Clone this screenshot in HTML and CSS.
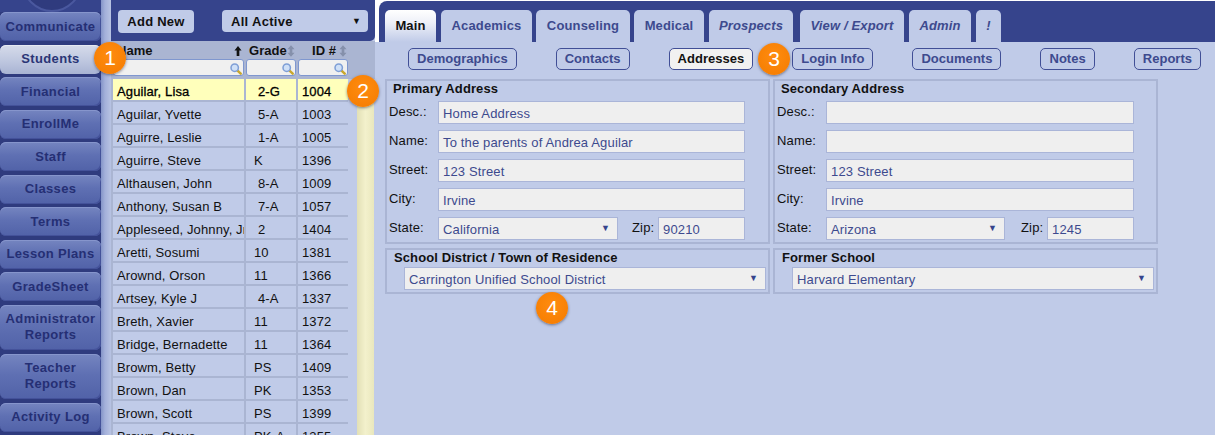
FILE: index.html
```html
<!DOCTYPE html>
<html lang="en">
<head>
<meta charset="utf-8">
<title>Students</title>
<link rel="stylesheet" href="styles.css">
</head>
<body>
<svg class="defs" width="0" height="0" aria-hidden="true">
  <symbol id="mag" viewBox="0 0 14 14">
    <line x1="8.500" y1="8.500" x2="12.500" y2="12.500" stroke="#c9a72c" stroke-width="2.800" stroke-linecap="round"/>
    <circle cx="5.500" cy="5.500" r="4.300" fill="#cfe0f7" stroke="#7f9fd6" stroke-width="1.800"/>
  </symbol>
  <symbol id="sort" viewBox="0 0 9 13">
    <path d="M4.500 0 8.500 4.500H6V8.500h2.500L4.500 13 .5 8.500H3V4.500H.5z" fill="#8590ab"/>
  </symbol>
  <symbol id="up" viewBox="0 0 9 13">
    <path d="M4.500 1 8.500 6H6v6H3V6H.5z" fill="#111"/>
  </symbol>
</svg>
<div class="app">
  <nav class="nav">
    <div class="nav-logo"></div>
    <a class="nav-btn">Communicate</a>
    <a class="nav-btn active">Students</a>
    <a class="nav-btn">Financial</a>
    <a class="nav-btn">EnrollMe</a>
    <a class="nav-btn">Staff</a>
    <a class="nav-btn">Classes</a>
    <a class="nav-btn">Terms</a>
    <a class="nav-btn">Lesson Plans</a>
    <a class="nav-btn">GradeSheet</a>
    <a class="nav-btn tall">Administrator<br>Reports</a>
    <a class="nav-btn tall">Teacher<br>Reports</a>
    <a class="nav-btn">Activity Log</a>
  </nav>
  <div class="gutter"></div>
  <section class="list">
    <div class="list-top">
      <button class="add-btn">Add New</button>
      <div class="filter"><span>All Active</span><span class="filter-arrow">▼</span></div>
    </div>
    <div class="heads">
      <div class="head head-name"><span>Name</span><svg class="ico-sort"><use href="#up"/></svg></div>
      <div class="head head-grade"><span>Grade</span><svg class="ico-sort"><use href="#sort"/></svg></div>
      <div class="head head-id"><span>ID #</span><svg class="ico-sort"><use href="#sort"/></svg></div>
      <div class="search"><svg class="ico-mag"><use href="#mag"/></svg></div>
      <div class="search"><svg class="ico-mag"><use href="#mag"/></svg></div>
      <div class="search"><svg class="ico-mag"><use href="#mag"/></svg></div>
    </div>
    <div class="list-body">
      <div class="list-table">
        <div class="row sel"><div>Aguilar, Lisa</div><div class="g1">2-G</div><div>1004</div></div>
        <div class="row"><div>Aguilar, Yvette</div><div class="g1">5-A</div><div>1003</div></div>
        <div class="row"><div>Aguirre, Leslie</div><div class="g1">1-A</div><div>1005</div></div>
        <div class="row"><div>Aguirre, Steve</div><div>K</div><div>1396</div></div>
        <div class="row"><div>Althausen, John</div><div class="g1">8-A</div><div>1009</div></div>
        <div class="row"><div>Anthony, Susan B</div><div class="g1">7-A</div><div>1057</div></div>
        <div class="row"><div>Appleseed, Johnny, Jr</div><div class="g1">2</div><div>1404</div></div>
        <div class="row"><div>Aretti, Sosumi</div><div>10</div><div>1381</div></div>
        <div class="row"><div>Arownd, Orson</div><div>11</div><div>1366</div></div>
        <div class="row"><div>Artsey, Kyle J</div><div class="g1">4-A</div><div>1337</div></div>
        <div class="row"><div>Breth, Xavier</div><div>11</div><div>1372</div></div>
        <div class="row"><div>Bridge, Bernadette</div><div>11</div><div>1364</div></div>
        <div class="row"><div>Browm, Betty</div><div>PS</div><div>1409</div></div>
        <div class="row"><div>Brown, Dan</div><div>PK</div><div>1353</div></div>
        <div class="row"><div>Brown, Scott</div><div>PS</div><div>1399</div></div>
        <div class="row"><div>Brown, Steve</div><div>PK-A</div><div>1355</div></div>
      </div>
      <div class="scrollbar"></div>
    </div>
  </section>
  <main class="main">
    <div class="tabs-wrap">
      <div class="tabs">
        <a class="tab active">Main</a>
        <a class="tab t-aca">Academics</a>
        <a class="tab t-cou">Counseling</a>
        <a class="tab t-med">Medical</a>
        <a class="tab it t-pro">Prospects</a>
        <a class="tab it t-vie">View / Export</a>
        <a class="tab it t-adm">Admin</a>
        <a class="tab it t-ex">!</a>
      </div>
    </div>
    <div class="subtabs">
      <a class="sub">Demographics</a>
      <a class="sub">Contacts</a>
      <a class="sub active">Addresses</a>
      <a class="sub">Login Info</a>
      <a class="sub">Documents</a>
      <a class="sub">Notes</a>
      <a class="sub">Reports</a>
    </div>
    <div class="forms">
      <section class="box">
        <h3>Primary Address</h3>
        <div class="grid">
          <label>Desc.:</label><div class="inp">Home Address</div>
          <label>Name:</label><div class="inp">To the parents of Andrea Aguilar</div>
          <label>Street:</label><div class="inp">123 Street</div>
          <label>City:</label><div class="inp">Irvine</div>
          <label>State:</label>
          <div class="state">
            <div class="inp sel-box sel-a">California<span class="arrow">▼</span></div>
            <label class="zip-l">Zip:</label>
            <div class="inp zip">90210</div>
          </div>
        </div>
      </section>
      <section class="box alt">
        <h3>Secondary Address</h3>
        <div class="grid">
          <label>Desc.:</label><div class="inp"></div>
          <label>Name:</label><div class="inp"></div>
          <label>Street:</label><div class="inp">123 Street</div>
          <label>City:</label><div class="inp">Irvine</div>
          <label>State:</label>
          <div class="state">
            <div class="inp sel-box sel-a">Arizona<span class="arrow">▼</span></div>
            <label class="zip-l">Zip:</label>
            <div class="inp zip">1245</div>
          </div>
        </div>
      </section>
      <section class="box small">
        <h3>School District / Town of Residence</h3>
        <div class="inp sel-box wide">Carrington Unified School District<span class="arrow">▼</span></div>
      </section>
      <section class="box small">
        <h3>Former School</h3>
        <div class="inp sel-box wide">Harvard Elementary<span class="arrow">▼</span></div>
      </section>
    </div>
  </main>
</div>
<div class="badge b1">1</div>
<div class="badge b2">2</div>
<div class="badge b3">3</div>
<div class="badge b4">4</div>
</body>
</html>
```
FILE: styles.css
```css
* { box-sizing: border-box; }
html, body { margin: 0; padding: 0; }
body {
  width: 1215px; height: 435px; overflow: hidden; position: relative;
  background: #fff;
  font: 13px/1 "Liberation Sans", Arial, sans-serif;
  letter-spacing: .15px;
  color: #111;
}
.defs { position: absolute; }
.app { display: flex; height: 435px; }

/* left navigation */
.nav { width: 101px; flex: none; background: #2f3b7e; overflow: hidden; }
.nav-logo { height: 12px; background: #36448c; position: relative; overflow: hidden; }
.nav-logo::after {
  content: ""; position: absolute; left: 22px; top: -48px; width: 56px; height: 56px;
  border-radius: 50%; border: 2px solid #4a589f; background: #2f3b7e;
}
.nav-btn {
  display: flex; align-items: center; justify-content: center; text-align: center;
  height: 29px; margin-bottom: 3.5px;
  border-radius: 6px;
  background: linear-gradient(#7585c0, #5f70b3 45%, #5162a8);
  box-shadow: inset 0 1px 0 #8695cc, inset -1px -1px 0 #44529a;
  color: #252f74;
  font-weight: bold; font-size: 13px; line-height: 16px; letter-spacing: .35px;
}
.nav-btn.tall { height: 45.5px; }
.nav-btn.active {
  background: linear-gradient(#d6dbea, #bcc5de 60%, #a8b3d3);
  box-shadow: inset 0 1px 0 #e6e9f2;
  color: #2a3576;
}

.gutter { width: 10px; flex: none; background: linear-gradient(90deg, #8494c8, #a3b0da 40%, #b8c3e3); }

/* list panel */
.list { width: 264px; flex: none; background: #c0cbe8; display: flex; flex-direction: column; min-height: 0; }
.list-top {
  height: 41px; flex: none; background: #36448c; border-radius: 0 0 5px 0;
  display: flex; align-items: flex-start; padding: 10px 0 0 7px; font-weight: bold;
  letter-spacing: .3px;
}
.add-btn {
  width: 76px; height: 23px; border: 0; border-radius: 4px; background: #c0cbe8; color: #111;
  font: bold 13px "Liberation Sans", Arial, sans-serif; letter-spacing: .25px; padding: 0;
}
.filter {
  width: 146px; height: 22px; margin-left: 28px; border-radius: 4px; background: #c0cbe8;
  display: flex; align-items: center; justify-content: space-between; padding: 0 7px 0 9px;
}
.filter-arrow { font-size: 9px; letter-spacing: 0; }
.heads {
  display: grid; grid-template-columns: 131px 50px 50px; column-gap: 2px;
  grid-template-rows: 18px 17px; height: 38px; flex: none; padding-left: 2px;
  background: #aab5d2;
}
.head {
  display: flex; align-items: center; justify-content: space-between;
  font-weight: bold; padding-right: 2px; padding-top: 1px; letter-spacing: .05px;
}
.head-name { padding-left: 4px; }
.head-grade { padding-left: 3px; padding-right: 1px; }
.head-id { padding-left: 14px; padding-right: 1px; }
.ico-sort { width: 8px; height: 12px; flex: none; }
.search {
  height: 17px; background: #f0f0f0; border: 1px solid #7f97cf; border-radius: 3px;
  display: flex; justify-content: flex-end; align-items: center; padding-right: 1px;
}
.ico-mag { width: 12px; height: 12px; margin-top: 2px; }
.list-body { flex: 1; display: flex; min-height: 0; overflow: hidden; background: #c0cbe8; }
.list-table { width: 237px; flex: none; background: #aab5d2; padding-left: 2px; }
.row {
  display: grid; grid-template-columns: 131px 50px 50px; column-gap: 2px;
  height: 21px; margin-bottom: 2px; line-height: 25px;
}
.row > div { background: #c0cbe8; padding-left: 4px; white-space: nowrap; overflow: hidden; letter-spacing: .12px; }
.row > div:nth-child(2) { padding-left: 8px; }
.row > div.g1 { padding-left: 12px; }
.row.sel { -webkit-text-stroke: .3px #000; color: #000; }
.row.sel > div { background: #ffffbb; }
.scrollbar {
  width: 17px; margin-left: 9px; flex: none;
  background: linear-gradient(90deg, #e2e0b6, #f3f1cc 50%, #e9e7bd);
}

/* main */
.main { flex: 1; background: #c0cbe8; min-width: 0; }
.tabs-wrap { background: #fff; padding: 1px 0 0 4px; }
.tabs {
  height: 41px; background: #36448c; border-radius: 8px 0 0 0;
  display: flex; padding: 8px 0 0 6px; gap: 5px; align-items: flex-end;
}
.tab {
  height: 32px; background: #c0cbe8; border-radius: 5px 5px 0 0;
  color: #3d4a8e; font-weight: bold; padding-top: 9px; text-align: center; flex: none;
}
.tab.active { width: 51px; color: #111; background: linear-gradient(#fff, #eef0f8 40%, #c0cbe8); }
.t-aca { width: 91px; }
.t-cou { width: 94px; margin-left: -1px; }
.t-med { width: 70px; margin-left: -1px; }
.t-pro { width: 84px; }
.t-vie { width: 104px; margin-left: 2px; }
.t-adm { width: 62px; }
.t-ex { width: 25px; }
.it { font-style: italic; }
.subtabs { display: flex; gap: 39px; padding: 6px 0 0 33px; }
.sub {
  height: 22px; padding: 0 8px; line-height: 20px;
  border: 1px solid #414f96; border-radius: 5px;
  color: #3d4a8e; font-weight: bold; white-space: nowrap; letter-spacing: .03px;
}
.sub.active { background: #f1f1f1; color: #111; }
.forms {
  display: grid; grid-template-columns: 385px 385px; column-gap: 3px; row-gap: 4px;
  margin: 9px 0 0 10px; width: 773px;
}
.box { height: 165px; border: 2px solid #aab5d4; padding: 0 0 0 2px; }
.box.small { height: 46px; }
h3 { margin: 0; line-height: 16px; font-size: 13px; font-weight: bold; padding-left: 4px; letter-spacing: .1px; }
.grid {
  display: grid; grid-template-columns: 49px 307px; grid-auto-rows: 23px; row-gap: 6px;
  margin-top: 4px;
}
.alt .grid { grid-template-columns: 49px 308px; }
.alt .sel-a { width: 179px; }
.alt .zip-l { margin-left: 16px; }
label { line-height: 21px; }
.inp {
  height: 23px; background: #efefef; border: 1px solid #aab5d8;
  padding-left: 4px; line-height: 24px; color: #3d4a8e; position: relative; white-space: nowrap;
}
.state { display: flex; }
.sel-a { width: 180px; }
.arrow { position: absolute; right: 7px; top: -2px; font-size: 9px; letter-spacing: 0; color: #36448c; }
.zip-l { margin-left: 14px; width: 26px; }
.zip { width: 87px; }
.wide { margin: 1px 0 0 15px; width: 362px; }
.box.small h3 { padding-left: 5px; }

/* callouts */
.badge {
  position: absolute; width: 32px; height: 32px; border-radius: 50%;
  background: radial-gradient(circle at 50% 40%, #ff8c0f, #f47b00);
  box-shadow: 0 1px 3px rgba(40,40,60,.55);
  color: #fff; font-size: 21px; line-height: 32px; text-align: center; letter-spacing: 0;
}
.b1 { left: 94px; top: 42px; }
.b2 { left: 347px; top: 75px; }
.b3 { left: 758px; top: 43px; }
.b4 { left: 536px; top: 292px; }
```
